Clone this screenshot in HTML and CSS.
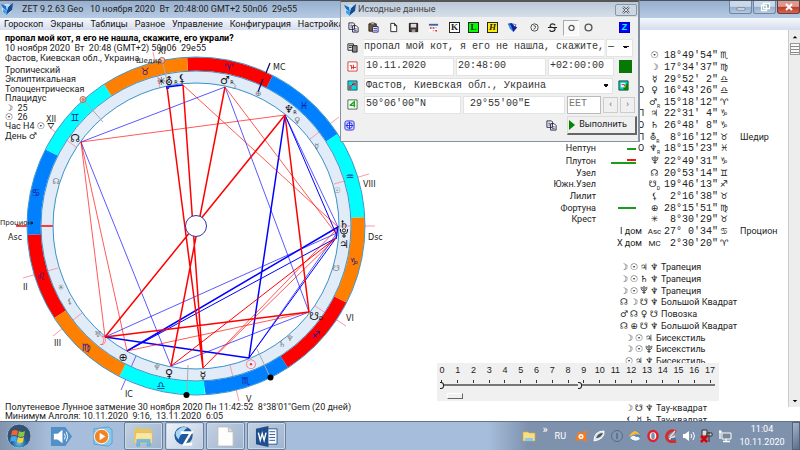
FILE: index.html
```html
<!DOCTYPE html>
<html lang="ru">
<head>
<meta charset="utf-8">
<title>ZET 9.2.63 Geo</title>
<link rel="stylesheet" href="styles.css">
</head>
<body>
<svg class="sprite" aria-hidden="true">
  <symbol id="pluto" viewBox="0 0 10 10"><g fill="none" stroke="currentColor"><circle cx="5" cy="2.500" r="1.600"/><path d="M1.500 1v2q0 3 3.500 3t3.500-3V1M5 6v4M3 8h4"/></g></symbol>
  <symbol id="copy" viewBox="0 0 12 12"><path d="M1 1h5l1 1v6H1zM5 4h4l2 2v5H5z" fill="#fff" stroke="#223"/><path d="M2.500 3.500h2M2.500 5.500h2M6.500 7.500h3M6.500 9.500h3" stroke="#339"/></symbol>
  <symbol id="zet" viewBox="0 0 12 12"><circle cx="6" cy="6" r="5" fill="#d5e8f6"/><path d="M0 1l5 2 1 5-4-3z" fill="#1c6fc4"/><path d="M12 0L7 4 5 12l6-5z" fill="#164b93"/><path d="M2 6l4 2 0 4-4-3z" fill="#3ba0e6"/><path d="M5 2l3 1-2 3z" fill="#9ed4f8"/></symbol>
</svg>

<header class="titlebar">
  <svg class="app-icon"><use href="#zet"/></svg>
  <span class="title">ZET 9.2.63 Geo &nbsp; 10 ноября 2020&nbsp; Вт&nbsp; 20:48:00 GMT+2 50n06&nbsp; 29e55</span>
  <div class="winbtns">
    <button aria-label="Свернуть"><svg viewBox="0 0 12 10"><path d="M2 6h8v2H2z" fill="#fff" stroke="#567" stroke-width=".6"/></svg></button>
    <button aria-label="Восстановить"><svg viewBox="0 0 12 10"><path d="M4.500 1.500h6v5h-6zM2.500 3.500h5v5h-5z" fill="#8aa" stroke="#fff" stroke-width="1.300"/></svg></button>
    <button class="close" aria-label="Закрыть"><svg viewBox="0 0 12 10"><path d="M3 2l6 6M9 2L3 8" stroke="#fff" stroke-width="2"/></svg></button>
  </div>
</header>
<nav class="menu">
  <a href="#">Гороскоп</a><a href="#">Экраны</a><a href="#">Таблицы</a><a href="#">Разное</a><a href="#">Управление</a><a href="#">Конфигурация</a><a href="#">Настройка</a>
</nav>

<main class="client">
  <section class="chart">
    <svg class="wheel" viewBox="0 30 400 391" preserveAspectRatio="xMinYMin meet">
      <circle cx="196" cy="226" r="149" fill="none" stroke="#e1ecf8" stroke-width="13"/>
      <g class="cusp">
        <path d="M334 184l35-10M310 139l29-22M315 306l31 20M230 365l9 36M58 268l-35 10M82 313l-29 23M76 147l-26-19M160 88l-7-36M339 226h36"/>
        <path d="M136 356l-15 34" class="ic"/>
        <path d="M16 226h37" class="asc"/>
      </g>
      <g fill="none" stroke-width="13.500" transform="rotate(-93 196 226)">
        <circle cx="196" cy="226" r="162" pathLength="12" stroke="#f00" stroke-dasharray="1 3"/>
        <circle cx="196" cy="226" r="162" pathLength="12" stroke="#007fff" stroke-dasharray="1 3" stroke-dashoffset="-1"/>
        <circle cx="196" cy="226" r="162" pathLength="12" stroke="#0ff" stroke-dasharray="1 3" stroke-dashoffset="-2"/>
        <circle cx="196" cy="226" r="162" pathLength="12" stroke="#ff8000" stroke-dasharray="1 3" stroke-dashoffset="-3"/>
      </g>
      <g fill="none" stroke="#3f94c8">
        <circle cx="196" cy="226" r="169"/><circle cx="196" cy="226" r="155"/><circle cx="196" cy="226" r="143"/>
      </g>
      <path d="M83 99l20 23M162 60l6 25M188 365l-1 30M257 349l13 28" stroke="#aaa"/>
      <path d="M270 63l-4 10M263 79l-5 13" stroke="#116" stroke-width="1.300"/>
      <g class="thin blue"><path d="M81 142L225 87M81 142L171 366M225 87L309 312M105 337L337 233M171 366L309 312M285 115L338 227M249 358L337 233"/></g>
      <g class="mid blue"><path d="M285 115L337 236M249 358L336 238M127 351L336 238"/></g>
      <g class="thick blue"><path d="M167 87L183 85M127 351L338 227M105 337L249 358M285 115L249 358M338 226L336 239"/></g>
      <g class="thin red"><path d="M81 142L285 115M81 142L105 337M81 142L127 351M183 85L338 227M225 87L337 235M127 351L309 312M203 368L338 228M203 368L336 238"/></g>
      <g class="mid red"><path d="M171 366L336 238"/></g>
      <g class="thick red"><path d="M167 87L203 368M183 85L203 368M225 87L171 366M285 115L105 337M285 115L309 312M105 337L309 312"/></g>
      <path d="M166 86h3v3h-3z" fill="#22f"/>
      <circle cx="196" cy="226" r="10.500" fill="#fff" stroke="#33a"/>
      <g fill="#fbb" fill-opacity=".6" stroke="#b64"><circle cx="83" cy="99.500" r="3"/><circle cx="83" cy="99.500" r="1"/><circle cx="162" cy="60.500" r="3"/></g>
      <circle cx="186.500" cy="395" r="3"/><circle cx="270.500" cy="377.500" r="3"/><circle cx="32" cy="223" r="1"/>
      <g class="sign">
        <text x="145" y="75">♉&#xFE0E;</text><text x="229" y="71">♈&#xFE0E;</text><text x="304" y="109">♓&#xFE0E;</text><text x="350" y="180">♒&#xFE0E;</text><text x="354" y="265">♑&#xFE0E;</text><text x="316" y="338">♐&#xFE0E;</text><text x="246" y="384">♏&#xFE0E;</text><text x="161" y="389">♎&#xFE0E;</text><text x="86" y="351">♍&#xFE0E;</text><text x="41" y="280">♌&#xFE0E;</text><text x="36" y="196">♋&#xFE0E;</text><text x="75" y="121">♊&#xFE0E;</text>
      </g>
      <g class="planet">
        <text x="75" y="142">☊</text><text x="161" y="85">✳&#xFE0E;</text><text x="169" y="85">⛢</text><text x="182" y="82">⚸</text><text x="225" y="84">♂&#xFE0E;</text><text x="289" y="113">♆</text><text x="344" y="228">♄</text><text x="344" y="248">♃</text><text x="314" y="320">☋</text><text x="203" y="379">☿</text><text x="169" y="377">♀&#xFE0E;</text><text x="123" y="361">⊕</text>
        <text class="hot" x="251" y="369">☉</text><text class="hot" x="101" y="345">☽</text>
        <use href="#pluto" x="339" y="228" width="10" height="10"/>
      </g>
      <g class="tiny"><text x="176" y="84">R</text><text x="232" y="84">R</text><text x="295" y="114">R</text><text x="321" y="320">D</text></g>
      <g class="transit">
        <text x="98" y="337">♅</text><text x="157" y="370">♆</text><text x="61" y="290">✳&#xFE0E;</text><text x="70" y="304">⚸</text><text x="56" y="184">☊</text><text x="258" y="96">⊕</text><text x="297" y="123">♀&#xFE0E;</text><text x="317" y="149">☿</text><text x="337" y="193">☉</text><text x="336" y="271">☋</text><text x="282" y="347">♄</text><text x="290" y="341">♆</text><text x="233" y="89">☽</text>
      </g>
      <g class="label">
        <text class="small" x="136" y="63">Шедир</text><text x="158" y="54">XI</text><text x="46" y="122">XII</text><text x="273" y="70">MC</text><text x="363" y="187">VIII</text><text x="368" y="240">Dsc</text><text x="346" y="321">VI</text><text x="246" y="402">V</text><text x="125" y="397">IC</text><text x="54" y="346">III</text><text x="23" y="290">II</text><text x="8" y="240">Asc</text><text class="small" x="0" y="225">Процион</text>
      </g>
    </svg>
    <div class="info">
      <h1>пропал мой кот, я его не нашла, скажите, его украли?</h1>
      <p>10 ноября 2020&nbsp; Вт&nbsp; 20:48 (GMT+2) 50n06&nbsp; 29e55</p>
      <p>Фастов, Киевская обл., Украина</p>
      <div class="method">
        <p>Тропический</p><p>Эклиптикальная</p><p>Топоцентрическая</p><p>Плацидус</p>
        <p>☽&nbsp; 25</p><p>☉&nbsp; 26</p><p>Час H4 ☉ ⛛</p><p>День ♂&#xFE0E;</p>
      </div>
    </div>
    <footer class="events">
      <p>Полутеневое Лунное затмение 30 ноября 2020 Пн 11:42:52&nbsp; 8°38'01"Gem (20 дней)</p>
      <p>Минимум Алголя: 10.11.2020&nbsp; 9:16,&nbsp; 13.11.2020&nbsp; 6:05</p>
    </footer>
  </section>

  <section class="data">
    <table class="positions">
      <colgroup><col class="c-name"><col class="c-bar"><col class="c-state"><col class="c-glyph"><col class="c-deg"><col class="c-sign"><col class="c-star"></colgroup>
      <tr><td></td><td></td><td></td><td>☉</td><td>18°49'54"</td><td>♏&#xFE0E;</td><td></td></tr>
      <tr><td></td><td></td><td></td><td>☽</td><td>17°34'37"</td><td>♍&#xFE0E;</td><td></td></tr>
      <tr><td></td><td></td><td></td><td>☿</td><td>29°52' 2"</td><td>♎&#xFE0E;</td><td></td></tr>
      <tr><td></td><td></td><td>О</td><td>♀&#xFE0E;</td><td>16°43'26"</td><td>♎&#xFE0E;</td><td></td></tr>
      <tr><td></td><td></td><td></td><td>♂&#xFE0E;<sub>R</sub></td><td>15°18'12"</td><td>♈&#xFE0E;</td><td></td></tr>
      <tr><td></td><td></td><td>П</td><td>♃</td><td>22°31' 4"</td><td>♑&#xFE0E;</td><td></td></tr>
      <tr><td></td><td></td><td>О</td><td>♄</td><td>26°48' 8"</td><td>♑&#xFE0E;</td><td></td></tr>
      <tr><td></td><td></td><td>П</td><td>⛢<sub>R</sub></td><td>8°16'12"</td><td>♉&#xFE0E;</td><td>Шедир</td></tr>
      <tr><td>Нептун</td><td><i class="bar short"></i></td><td>О</td><td>♆<sub>R</sub></td><td>18°15'23"</td><td>♓&#xFE0E;</td><td></td></tr>
      <tr><td>Плутон</td><td><i class="bar short neg"></i><i class="bar long"></i></td><td></td><td><svg class="g"><use href="#pluto"/></svg></td><td>22°49'31"</td><td>♑&#xFE0E;</td><td></td></tr>
      <tr><td>Узел</td><td></td><td></td><td>☊</td><td>20°53'14"</td><td>♊&#xFE0E;</td><td></td></tr>
      <tr><td>Южн.Узел</td><td></td><td></td><td>☋<sub>D</sub></td><td>19°46'13"</td><td>♐&#xFE0E;</td><td></td></tr>
      <tr><td>Лилит</td><td></td><td></td><td>⚸</td><td>2°16'38"</td><td>♉&#xFE0E;</td><td></td></tr>
      <tr><td>Фортуна</td><td><i class="bar medium"></i></td><td></td><td>⊕</td><td>28°15'51"</td><td>♍&#xFE0E;</td><td></td></tr>
      <tr><td>Крест</td><td></td><td></td><td>✳&#xFE0E;</td><td>8°30'29"</td><td>♉&#xFE0E;</td><td></td></tr>
      <tr><td colspan="3" class="house">I дом</td><td class="abbr">Asc</td><td>27° 0'34"</td><td>♋&#xFE0E;</td><td>Процион</td></tr>
      <tr><td colspan="3" class="house">X дом</td><td class="abbr">MC</td><td>2°30'20"</td><td>♈&#xFE0E;</td><td></td></tr>
    </table>
    <ul class="figures">
      <li><b>☽</b><b>☉</b><b>♃</b><b>♆</b><span>Трапеция</span></li>
      <li><b>☽</b><b>☉</b><b>♄</b><b>♆</b><span>Трапеция</span></li>
      <li><b>☽</b><b>☉</b><b><svg class="g"><use href="#pluto"/></svg></b><b>♆</b><span>Трапеция</span></li>
      <li><b>☊</b><b>☽</b><b>☋</b><b>♆</b><span>Большой Квадрат</span></li>
      <li><b>♂&#xFE0E;</b><b>☊</b><b>♀&#xFE0E;</b><b>☋</b><span>Повозка</span></li>
      <li><b>☊</b><b>⊕</b><b>☋</b><b>♆</b><span>Большой Квадрат</span></li>
      <li class="three"><b>☽</b><b>☉</b><b>♃</b><span>Бисекстиль</span></li>
      <li class="three"><b>☽</b><b>☉</b><b><svg class="g"><use href="#pluto"/></svg></b><span>Бисекстиль</span></li>
      <li class="three"><b>☉</b><b>♃</b><b>♆</b><span>Бисекстиль</span></li>
      <li></li><li></li><li></li>
      <li class="three"><b>☽</b><b>☋</b><b>♆</b><span>Тау-квадрат</span></li>
      <li class="three"><b>⚸</b><b>☿</b><b>♄</b><span>Тау-квадрат</span></li>
    </ul>
  </section>
  <div class="scroll"><button aria-label="Вверх"><svg viewBox="0 0 8 5"><path d="M1 4l3-3 3 3z"/></svg></button><span class="grip"></span><button class="down" aria-label="Вниз"><svg viewBox="0 0 8 5"><path d="M1 1l3 3 3-3z"/></svg></button></div>
</main>

<section class="ruler">
  <div class="marks"><span>0</span><span>1</span><span>2</span><span>3</span><span>4</span><span>5</span><span>6</span><span>7</span><span>8</span><span>9</span><span>10</span><span>11</span><span>12</span><span>13</span><span>14</span><span>15</span><span>16</span><span>17</span></div>
  <div class="track">
    <input type="range" aria-label="От" min="0" max="100" value="0">
    <input type="range" aria-label="До" min="0" max="100" value="51">
  </div>
  <button aria-label="Сброс"></button>
</section>

<form class="dialog">
  <header><svg class="app-icon"><use href="#zet"/></svg><span>Исходные данные</span>
    <button type="button" aria-label="Закрыть"><svg viewBox="0 0 10 8"><path d="M2 1l6 6M8 1L2 7" stroke="#556" stroke-width="2.200"/><path d="M2 1l6 6M8 1L2 7" stroke="#fff" stroke-width=".8"/></svg></button></header>
  <div class="tools">
    <button type="button" aria-label="Копировать"><svg viewBox="0 0 12 12"><use href="#copy"/></svg></button>
    <button type="button" aria-label="Вставить"><svg viewBox="0 0 12 12"><path d="M1 2h8v8H1z" fill="#7b5a2a" stroke="#222"/><path d="M3 1h4v2H3z" fill="#ddd" stroke="#222" stroke-width=".7"/><path d="M5 5h6v6H5z" fill="#fff" stroke="#226"/><path d="M6 7h4M6 9h4" stroke="#339"/></svg></button>
    <button type="button" aria-label="Новый"><svg viewBox="0 0 12 12"><path d="M3 1.500h4l2.500 2.500v6.500H3zM7 1.500V4h2.500" fill="#fff" stroke="#222"/></svg></button>
    <button type="button" aria-label="Сохранить"><svg viewBox="0 0 12 12"><path d="M1.500 1.500h9v9h-9z" fill="#433" stroke="#111"/><path d="M3 2h6v4H3z" fill="#ddd"/><path d="M4 8h4v3H4z" fill="#999"/></svg></button>
    <button type="button" aria-label="Календарь"><svg viewBox="0 0 12 12"><path d="M1 2h10v2H1z" fill="#36a"/><path d="M1 5.500h10v5H1z" fill="#fff"/><path d="M2 6.500h2M5 6.500h2M8 9.500h2" stroke="#e22" stroke-width="1.500"/><path d="M8 6.500h2M5 9.500h2" stroke="#99b"/></svg></button>
    <button type="button" class="letter k">K</button>
    <button type="button" class="letter l">L</button>
    <button type="button" class="letter h">H</button>
    <button type="button" aria-label="База"><svg viewBox="0 0 12 12"><path d="M1 2l4-1 6 5-4 5z" fill="#129"/><path d="M1 2l3 1 3 8-4-4z" fill="#38d"/><path d="M6 2l4 1-2 2z" fill="#fff" stroke="#129" stroke-width=".6"/></svg></button>
    <button type="button" class="mode1" aria-label="Режим 1"><svg viewBox="0 0 12 12" fill="none" stroke="#444"><circle cx="6" cy="6" r="4"/><path d="M5 4q3 0 2 2t-2 2"/></svg></button>
    <button type="button" aria-label="Режим 2"><svg viewBox="0 0 12 12" fill="none" stroke="#222" stroke-width="1.300"><path d="M9 3.500Q8 2 6 2T3.500 4 6 6t2.800 2T6 10.300 3 8.500M1 6h10"/></svg></button>
    <button type="button" class="pressed" aria-label="Режим 3"><svg viewBox="0 0 12 12" fill="none" stroke="#555" stroke-width="1.300"><circle cx="6" cy="6.500" r="2.800"/></svg></button>
    <button type="button" aria-label="Режим 4"><svg viewBox="0 0 12 12" fill="none" stroke="#555" stroke-width="1.500"><circle cx="6" cy="6" r="3.700"/></svg></button>
    <button type="button" class="letter z">Z</button>
  </div>
  <div class="row">
    <svg class="ico" viewBox="0 0 12 12"><path d="M1 2h6v7H1z" fill="#eee" stroke="#222"/><path d="M6 4h5v7H6z" fill="#888" stroke="#222"/><path d="M2 4h4M2 6h3" stroke="#222"/></svg>
    <input class="name" aria-label="Имя" value="пропал мой кот, я его не нашла, скажите,">
    <select class="mode" aria-label="Пол"><option>—</option></select>
  </div>
  <div class="row">
    <svg class="ico" viewBox="0 0 12 12"><path d="M1 1h10v10H1z" fill="#fff" stroke="#c44"/><path d="M3 5h2v4M7 4v5M5 7h5" fill="none" stroke="#d22"/></svg>
    <input class="date" aria-label="Дата" value="10.11.2020"><input class="date" aria-label="Время" value="20:48:00"><input class="zone" aria-label="Пояс" value="+02:00:00"><button type="button" class="green" aria-label="Сейчас"></button>
  </div>
  <div class="row">
    <svg class="ico" viewBox="0 0 12 12"><path d="M1 1h10v10H1z" fill="#0dd" stroke="#256"/><path d="M6 3h4v3H6zM2 6h3v4H2z" fill="#d44"/><path d="M5 6l2-2" stroke="#115"/></svg>
    <select class="place" aria-label="Место"><option>Фастов, Киевская обл., Украина</option></select>
    <svg class="ico atlas" viewBox="0 0 12 12"><path d="M1 1h10v10H1z" fill="#0cc" stroke="#143"/><path d="M6 11V7l5-4v8z" fill="#080"/><path d="M3 3h5v5H3z" fill="#eee"/><path d="M4 5h3v2" fill="none" stroke="#d22"/></svg>
  </div>
  <div class="row">
    <svg class="ico" viewBox="0 0 12 12"><path d="M1 1h10v10H1z" fill="#fff" stroke="#464"/><path d="M3 7l5-4v6M3 7h6" fill="none" stroke="#1a1" stroke-width="1.500"/></svg>
    <input class="lat" aria-label="Широта" value="50°06'00&quot;N"><input class="lon" aria-label="Долгота" value="29°55'00&quot;E"><input class="tz" aria-label="Зона" value="EET"><button type="button" class="step" aria-label="Назад">‹</button><button type="button" class="step" aria-label="Вперёд">›</button>
  </div>
  <div class="row last">
    <svg class="ico" viewBox="0 0 12 12"><rect x="1" y="1" width="10" height="10" rx="2" fill="#ccf" stroke="#33c"/><circle cx="6" cy="6" r="3" fill="#fff" stroke="#22e"/><path d="M6 2v8M2 6h8" stroke="#22e"/></svg>
    <svg class="ico right" viewBox="0 0 12 12"><use href="#copy"/></svg>
    <button type="submit" class="run"><svg viewBox="0 0 6 10"><path d="M0 0l6 5-6 5z" fill="#080"/></svg>Выполнить</button>
  </div>
</form>

<footer class="taskbar">
  <button class="start" aria-label="Пуск"><svg viewBox="0 0 26 26"><defs><radialGradient id="orb" cy=".8"><stop offset="0" stop-color="#5cc4ee"/><stop offset=".6" stop-color="#245f98"/><stop offset="1" stop-color="#35516f"/></radialGradient></defs><circle cx="13" cy="13" r="12" fill="url(#orb)" stroke="#9bb7cf"/><path d="M6 8q3-2 6 0l-1 5q-3-2-6 0z" fill="#f2622b"/><path d="M13 8q3 2 6 0l-1 5q-3 2-6 0z" fill="#8cc63f"/><path d="M5 14q3-2 6 0l-1 5q-3-2-6 0z" fill="#3fa9f5"/><path d="M12 14q3 2 6 0l-1 5q-3 2-6 0z" fill="#fdd02f"/></svg></button>
  <button class="pin" aria-label="Звук"><svg viewBox="0 0 24 24"><path d="M1 2h15l7 10-7 10H1z" fill="#5290c7"/><path d="M4 9h4l5-4v14l-5-4H4z" fill="#fff"/><path d="M15 9q2 3 0 6M17 7q3 5 0 10" fill="none" stroke="#fff"/></svg></button>
  <button class="pin" aria-label="Проигрыватель"><svg viewBox="0 0 24 24"><path d="M3 4l15-2 4 3v14l-4 3-15-2z" fill="#8cc8ea" stroke="#5ba2cf"/><circle cx="11" cy="12" r="7.500" fill="#f58220" stroke="#fff"/><path d="M9 8l6 4-6 4z" fill="#fff"/></svg></button>
  <button class="task" aria-label="Проводник"><svg viewBox="0 0 24 24"><path d="M2 5l5-3 2 2h10l2 3v12H2z" fill="#e8c662"/><path d="M4 8h17v11H3z" fill="#fae7a0" stroke="#d9b44c" stroke-width=".5"/><path d="M5 22v-7h14v7h-3v-4H8v4z" fill="#70bce5" stroke="#4c9acb" stroke-width=".5"/></svg></button>
  <button class="task active" aria-label="ZET"><svg viewBox="0 0 24 24"><circle cx="11" cy="11" r="9.500" fill="#1c5aa2"/><path d="M3 7q6-7 12-4-4 2-5 6-3 1-4 6-4-3-3-8z" fill="#a9d5f4"/><path d="M8 8h11L12 20h8" fill="none" stroke="#fff" stroke-width="3"/><path d="M20 9l-6 10" fill="none" stroke="#123" stroke-width=".7"/></svg></button>
  <button class="task" aria-label="Документ"><svg viewBox="0 0 24 24"><path d="M4 2h11l5 5v15H4z" fill="#fdfdfd" stroke="#bbb"/><path d="M15 2v5h5" fill="#ddd" stroke="#bbb"/></svg></button>
  <button class="task" aria-label="Word"><svg viewBox="0 0 24 24"><path d="M13 4h10v16H13z" fill="#fff" stroke="#2b579a"/><path d="M15 7h6M15 10h6M15 13h6M15 16h6" stroke="#2b579a"/><path d="M1 4l13-3v22L1 20z" fill="#1f4e8c"/><path d="M3.500 8l2 8 2-7 2 7 2-8" fill="none" stroke="#fff" stroke-width="1.500"/></svg></button>
  <div class="tray">
    <svg class="folder" viewBox="0 0 14 12"><path d="M1 2h5l1 1h6v8H1z" fill="#f7dd84" stroke="#d4ad45" stroke-width=".6"/><path d="M3 8h8v3H3z" fill="#8bc9ec"/></svg>
    <span class="more">»</span><span class="lang">RU</span>
    <svg viewBox="0 0 14 14"><path d="M1 12L4 3l4 1 5-3-1 7 1 5-5-2z" fill="#f47b20"/><circle cx="7" cy="7.500" r="2.500" fill="#fff"/><circle cx="7" cy="7.500" r="1" fill="#f47b20"/></svg>
    <svg viewBox="0 0 14 14"><path d="M2 12Q2 2 12 2q1 8-10 10z" fill="#ddd" stroke="#fff"/><path d="M4 9q2-5 7-5-2 5-7 5z" fill="#456"/></svg>
    <svg viewBox="0 0 14 14"><circle cx="7" cy="7" r="5.500" fill="#8496ad" stroke="#556b87"/><path d="M7 4v6" stroke="#556b87" stroke-width="1.500"/></svg>
    <svg viewBox="0 0 14 14"><circle cx="7" cy="7" r="5.500" fill="#4f87c0"/><path d="M1.500 6Q7-2 12.500 6 7 4 1.500 8z" fill="#f5b635"/><path d="M2 9q3-4 6-1 3-1 4 2-5 4-10-1z" fill="#f4f4f4"/></svg>
    <svg viewBox="0 0 14 14"><ellipse cx="7" cy="7" rx="4.500" ry="5" fill="#fff" stroke="#e0202a" stroke-width="2.500"/><ellipse cx="7" cy="7" rx="1.800" ry="3.500" fill="#7f92ad"/></svg>
    <svg viewBox="0 0 14 14"><path d="M12 3Q7 0 4 4t0 7q3 3 8 1" fill="none" stroke="#d22c2c" stroke-width="3"/><path d="M6 8l5-6M5 10l6-3" stroke="#f3d9d0" stroke-width="1.500"/><path d="M7 10h5" stroke="#47a" stroke-width="2"/></svg>
    <svg viewBox="0 0 14 14"><path d="M1 5h2l4-3v10L3 9H1z" fill="#fff"/><path d="M9 5q1.500 2 0 4M11 3q3 4 0 8" fill="none" stroke="#fff"/></svg>
    <svg viewBox="0 0 14 14"><path d="M2 1h5v6H2zM9 3v10M7 4h5v3H7z" fill="#ddd" stroke="#333"/><path d="M1 7l6 6M7 7l-6 6" stroke="#d00" stroke-width="2.500"/></svg>
    <svg viewBox="0 0 14 14"><path d="M4 4h9v6H4z" fill="#789" stroke="#fff"/><path d="M8 10v2M5 12.500h7M2 1v9M1 3h3" fill="none" stroke="#fff" stroke-width="1.300"/></svg>
  </div>
  <div class="clock"><span>11:04</span><span>10.11.2020</span></div>
  <button class="desk" aria-label="Показать рабочий стол"></button>
</footer>
</body>
</html>
```
FILE: styles.css
```css
* { box-sizing: border-box; }
html, body { height: 100%; margin: 0; }
body {
  display: flex;
  flex-direction: column;
  position: relative;
  overflow: hidden;
  background: #fff;
  color: #222;
  font: 9px/9px Roboto, "DejaVu Sans", sans-serif;
}
p, h1, ul { margin: 0; padding: 0; }
button, input, select { font: inherit; margin: 0; padding: 0; border: 0; color: inherit; border-radius: 0; }
button { background: none; display: flex; align-items: center; justify-content: center; }
.sprite { position: absolute; width: 0; height: 0; }
.app-icon { width: 12px; height: 12px; flex: none; }

.titlebar {
  flex: none;
  display: flex;
  align-items: center;
  height: 18px;
  padding: 0 0 2px 1px;
  border-top: 1px solid #4a545f;
  background: linear-gradient(#98b0ce, #b5cae3);
  line-height: 14px;
}
.title { margin-left: 9px; white-space: pre; }
.winbtns { display: flex; gap: 1px; margin-left: auto; align-self: flex-start; }
.winbtns button {
  width: 23px;
  height: 13px;
  border: 1px solid #6f86a3;
  border-top: 0;
  border-radius: 0 0 3px 3px;
  background: linear-gradient(#c9d8ea 45%, #94adcb 50%, #b5cae2);
}
.winbtns .close { background: linear-gradient(#dc9a8c 45%, #c0392b 50%, #d2664f); border-color: #6b3a3a; }
.winbtns svg { width: 12px; height: 10px; }

.menu {
  flex: none;
  display: flex;
  gap: 7px;
  height: 12px;
  padding-left: 4px;
  background: linear-gradient(#f5f8fc, #d5dced);
  line-height: 12px;
}
.menu a { color: #111; text-decoration: none; }

.client { flex: 1; min-height: 0; display: flex; }
.chart { position: relative; flex: 1; min-width: 0; }
.wheel { display: block; height: 100%; width: 100%; overflow: hidden; }
.cusp path { stroke: #f9a; fill: none; }
.cusp .asc { stroke: #f00; stroke-width: 1.5; }
.cusp .ic { stroke: #66f; }
.thin { fill: none; stroke-width: 1; opacity: .65; }
.mid { fill: none; stroke-width: 1; }
.thick { fill: none; stroke-width: 1.5; }
.blue { stroke: #00f; }
.red { stroke: #f00; }
.sign, .planet, .transit, .tiny { font-family: "DejaVu Sans", sans-serif; text-anchor: middle; }
.sign { font-size: 10px; fill: #1a1a96; }
.planet { font-size: 11px; fill: #111; }
.planet .hot { fill: #f22; font-size: 13px; }
.transit { font-size: 8px; fill: #777; }
.tiny { font-size: 5px; }
.label { font: 8px "DejaVu Sans", sans-serif; fill: #222; }
.label .small { font-size: 7px; }

.info { position: absolute; top: 3px; left: 5px; white-space: nowrap; }
.info h1 { font-size: 9px; line-height: 10px; color: #000; font-weight: bold; }
.info p { line-height: 9px; }
.info > p { line-height: 10px; }
.method { display: grid; grid-auto-rows: 1fr; height: 75px; margin-top: 3px; }
.events { position: absolute; left: 5px; bottom: 0; white-space: nowrap; }

.data { flex: none; width: 240px; padding-top: 20px; overflow: hidden; }
.positions { width: 240px; height: 199px; border-collapse: collapse; table-layout: fixed; }
.positions td { padding: 0; line-height: 9px; white-space: pre; overflow: visible; }
.c-name { width: 48px; } .c-bar { width: 40px; } .c-state { width: 10px; }
.c-glyph { width: 17px; } .c-deg { width: 55px; } .c-sign { width: 22px; } .c-star { width: 48px; }
.positions td:first-child { text-align: right; }
.positions td:first-child.house { padding-right: 4px; }
.positions td:nth-child(3), .positions td:nth-child(4) { text-align: center; }
.positions td:nth-last-child(3) { font: 10px/9px "Liberation Mono", monospace; text-align: right; }
.positions td:nth-last-child(2) { padding-left: 2px; text-align: left; }
.positions td:last-child { text-align: left; }
.positions .abbr { font-size: 8px; text-align: center; }
.positions sub { font-size: 5px; line-height: 1px; }
.bar { display: block; height: 2px; margin: 1px 0 1px auto; background: #1a9e1a; }
.short { width: 9px; } .medium { width: 18px; } .long { width: 25px; }
.neg { background: #f01818; }
.g { width: 8px; height: 8px; display: inline-block; }

.figures { display: grid; grid-template-rows: repeat(14, 1fr); height: 164px; margin: 13px 0 0 71px; list-style: none; }
.figures li { display: flex; align-items: center; min-height: 0; }
.figures b { width: 10px; font-weight: normal; text-align: center; flex: none; }
.figures span { margin-left: 2px; white-space: nowrap; }
.figures .three { padding-left: 5px; }

.scroll { flex: none; width: 12px; height: 377px; display: flex; flex-direction: column; align-items: center; background: #ededed; border-left: 1px solid #ccc; }
.scroll button { height: 13px; width: 11px; }
.scroll .down { margin-top: auto; }
.scroll svg { width: 6px; height: 4px; }
.grip { width: 10px; height: 12px; border: 1px solid #999; background: repeating-linear-gradient(#f8f8f8 0 2px, #888 2px 3px); }

.ruler { position: absolute; left: 437px; top: 363px; width: 282px; height: 38px; padding: 3px 1px 0 0; background: #f0f0f0; }
.marks { display: grid; grid-template-columns: repeat(18, 1fr); margin-left: -3px; font: 9px/9px "Liberation Sans", sans-serif; text-align: center; }
.marks span::after { content: ""; display: block; width: 1px; height: 3px; margin: 5px auto 0; background: #333; }
.track { position: relative; height: 7px; margin: 0 3px; background: linear-gradient(transparent 1px, #777 1px 3px, transparent 3px); }
.track input { position: absolute; inset: -2px 0 auto; width: 100%; height: 8px; appearance: none; background: none; pointer-events: none; }
.track input::-webkit-slider-thumb { appearance: none; width: 4px; height: 7px; border: 1px solid #222; border-left: 0; border-radius: 0 3px 3px 0; background: #eee; }
.ruler > button { width: 16px; height: 6px; margin: 3px 0 0 10px; border: 1px solid #fff; border-right-color: #666; border-bottom-color: #666; }

.dialog {
  position: absolute;
  left: 340px;
  top: 0;
  width: 300px;
  height: 142px;
  padding: 0 1px 0 3px;
  border: 1px solid #8592a2;
  border-top: 2px solid #555;
  border-right-width: 2px;
  background: #f0f0f0;
}
.dialog header { display: flex; align-items: center; height: 15px; margin: 0 -1px 0 -3px; padding-left: 3px; background: linear-gradient(#bcc9d8, #d5dfea); color: #444; }
.dialog header span { margin-left: 2px; }
.dialog header button { width: 22px; height: 12px; margin: 0 1px 0 auto; border: 1px solid #8996a8; border-radius: 2px; background: #ccd7e4; }
.dialog header button svg { width: 10px; height: 8px; }
.tools { display: flex; align-items: center; height: 21px; padding-left: 3px; }
.tools button { width: 13px; height: 16px; margin-right: 7px; flex: none; }
.tools button svg { width: 11px; height: 11px; }
.tools .letter { width: 11px; height: 11px; margin: 0 8px 0 0; border: 1px solid #222; font: bold 9px/9px "Liberation Serif", serif; }
.tools .k { background: #fff; margin-left: 2px; }
.tools .l { background: #0f0; }
.tools .h { background: #fe0; font-style: italic; }
.tools .mode1 { margin: 0 5px 0 2px; }
.tools .pressed { width: 16px; margin: 0 3px 0 -3px; border: 1px solid #aaa; border-right-color: #fff; border-bottom-color: #fff; background: #f8f8f8; }
.tools .z { margin: 0 7px 0 auto; border-color: #00c; background: #00f; color: #0ff; font-family: "Liberation Sans", sans-serif; }
.row { display: flex; align-items: center; height: 19px; gap: 2px; }
.row .ico { width: 11px; height: 11px; margin: 0 4px 0 3px; flex: none; }
.row input, .row select { height: 18px; background: #fff; font: 10px/14px "Liberation Mono", monospace; color: #333; min-width: 0; border: 1px solid #e3e3e3; padding: 0 0 2px 1px; }
.row select {
  appearance: none;
  padding-left: 1px;
  background: #fff linear-gradient(#111, #111) no-repeat;
  background-image: linear-gradient(45deg, transparent 50%, #111 50%), linear-gradient(-45deg, transparent 50%, #111 50%);
  background-size: 3px 3px;
  background-position: right 6px center, right 3px center;
}
.row .name { width: 240px; padding-left: 0; border-width: 1px 0; }
.row .mode { width: 27px; }
.row .date { width: 90px; }
.row .zone { width: 66px; }
.row .green { width: 13px; height: 13px; margin-left: 3px; background: #067806; }
.row .place { width: 249px; height: 16px; }
.row .atlas { margin: 0 0 0 3px; }
.row .lat { width: 97px; }
.row .lon { width: 102px; padding-left: 6px; }
.row .tz { width: 34px; color: #777; border-color: #bbb; }
.row .step { width: 15px; height: 16px; border: 1px solid #ccc; color: #666; }
.row.last { height: 22px; }
.last .ico:first-child { margin-left: 0; }
.row .right { margin: 0 8px 0 auto; }
.run { width: 70px; height: 19px; gap: 4px; padding-right: 7px; border: 1px solid #ddd; border-right: 2px solid #666; border-bottom: 2px solid #666; }
.run svg { width: 6px; height: 10px; }

.taskbar {
  flex: none;
  position: relative;
  display: flex;
  align-items: center;
  height: 29px;
  border-top: 1px solid #60748e;
  background: linear-gradient(90deg, #8193ad 0, #a6bedb 50px, #a6bedb 61%, #7e92ae 66%, #7e92ae);
}
.start { width: 26px; height: 26px; margin: 0 17px 0 6px; flex: none; }
.start svg { width: 26px; height: 26px; }
.pin { width: 24px; margin-right: 17px; flex: none; }
.pin svg, .task svg { width: 23px; height: 23px; }
.pin + .task { margin-left: -7px; }
.task { width: 39px; height: 28px; margin-right: 2px; flex: none; border: 1px solid #6b809b; border-radius: 2px; box-shadow: inset 0 0 0 1px #c9d7e8; background: linear-gradient(135deg, #c3d1e2, #9fb4ce); }
.task.active { background: linear-gradient(135deg, #eef3f9, #bccbdf); }
.tray { display: flex; align-items: center; gap: 4px; margin-left: auto; color: #fff; line-height: 12px; }
.tray svg { width: 14px; height: 14px; flex: none; }
.tray .folder { align-self: flex-start; }
.more { margin: -12px 3px 0 2px; font-size: 11px; }
.lang { margin-right: 4px; }
.clock { display: flex; flex-direction: column; align-items: center; width: 60px; color: #fff; line-height: 13px; }
.desk { width: 8px; height: 28px; border: 1px solid #52647c; background: linear-gradient(135deg, #a4b4c9, #5b6f8b); }
```
